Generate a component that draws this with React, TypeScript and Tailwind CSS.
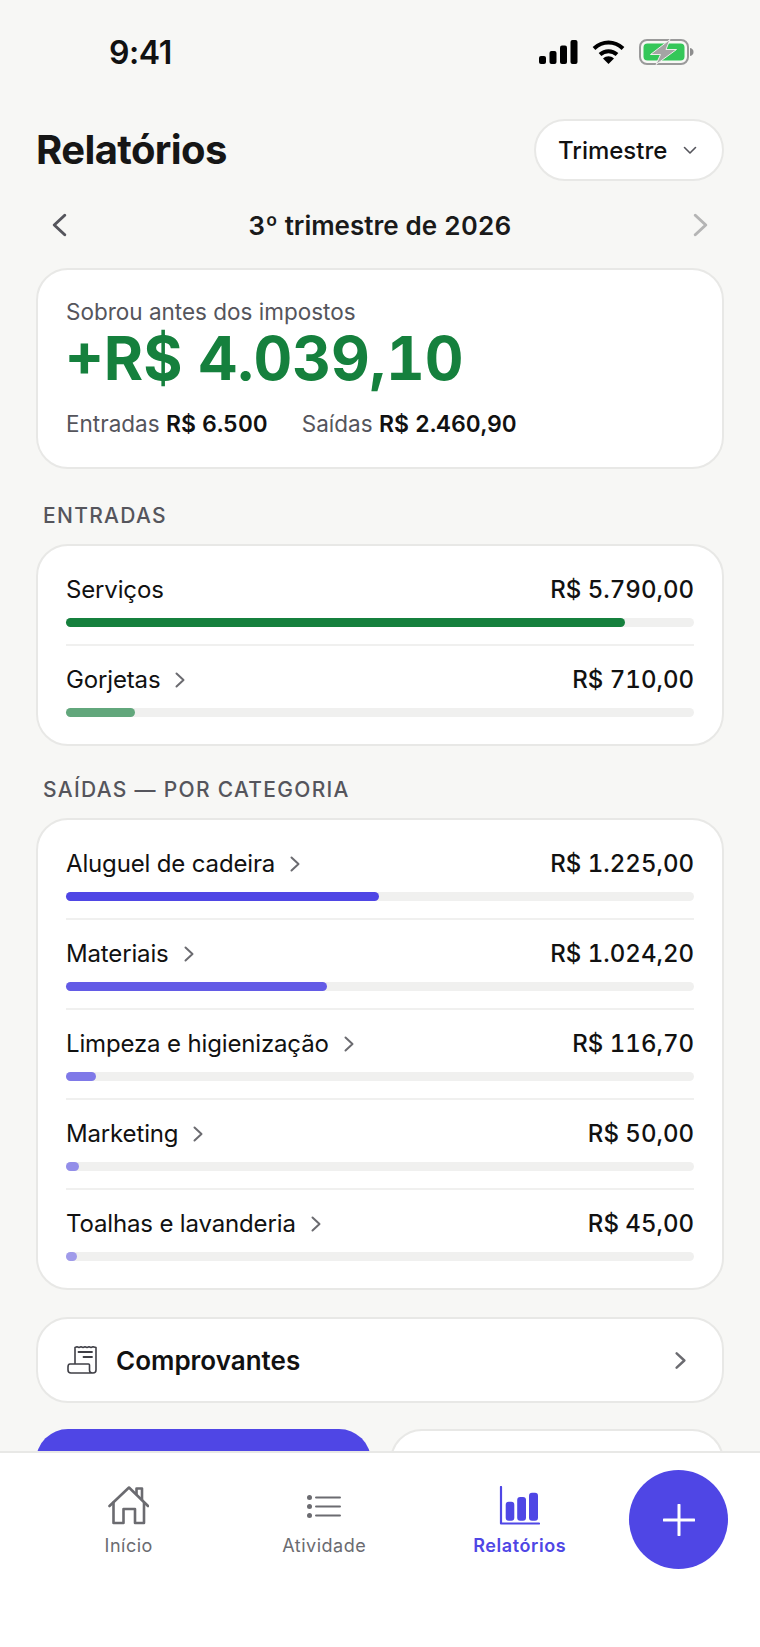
import React from 'react';

const Chevron = ({ className, width = 2 }: { className?: string; width?: number }) => (
  <svg viewBox="0 0 10 16" className={className} fill="none" stroke="currentColor" strokeWidth={width} strokeLinecap="round" strokeLinejoin="round">
    <polyline points="1.5,1.5 8.5,8 1.5,14.5" />
  </svg>
);

const StatusBar = () => (
  <div className="flex h-[104px] items-center justify-between pl-[109px] pr-[66px]">
    <span className="pt-[2px] text-[32px] font-semibold tracking-[-0.4px] text-[#111]">9:41</span>
    <div className="flex items-center gap-[14px]">
      <svg width="39" height="24" viewBox="0 0 39 24" fill="#000">
        <rect x="0" y="16" width="7" height="8" rx="2" />
        <rect x="10.5" y="11" width="7" height="13" rx="2" />
        <rect x="21" y="5.5" width="7" height="18.5" rx="2" />
        <rect x="31.5" y="0" width="7" height="24" rx="2" />
      </svg>
      <svg width="33" height="24" viewBox="0 0 33 24" fill="none" stroke="#000" strokeWidth="4">
        <path d="M2 8.5C10.5 0.5 22.5 0.5 31 8.5" />
        <path d="M8 14.5C13 10 20 10 25 14.5" />
        <path d="M16.5 24L11 18.5C14.5 15.5 18.5 15.5 22 18.5Z" fill="#000" stroke="none" />
      </svg>
      <svg width="55" height="26" viewBox="0 0 55 26">
        <rect x="1" y="1" width="48" height="24" rx="7" fill="none" stroke="#9a9a9a" strokeWidth="2" />
        <rect x="4.5" y="4.5" width="41" height="17" rx="4" fill="#34c759" />
        <path d="M51 9C53.5 9.5 54.5 11 54.5 13C54.5 15 53.5 16.5 51 17Z" fill="#8e8e8e" />
        <path d="M31 0.5L11.5 15.5H21.5L17 25.5L37.5 10.5H27Z" fill="#a4a4a4" stroke="#eeeeec" strokeWidth="1" />
      </svg>
    </div>
  </div>
);

const Bar = ({ pct, color, opacity }: { pct: number; color: string; opacity: number }) => (
  <div className="h-[9px] rounded-full bg-[#f0f0ef]">
    <div className={`h-full rounded-full ${color}`} style={{ width: `${pct}%`, opacity }} />
  </div>
);

type RowData = { label: string; value: string; pct: number; opacity: number; chevron?: boolean };

const Row = ({ row, color, first }: { row: RowData; color: string; first: boolean }) => (
  <div className={first ? 'pt-[26px] pb-[17px]' : 'border-t-2 border-[#f0f0ef] pt-[16px] pb-[17px]'}>
    <div className="flex h-[35px] items-center justify-between pt-[1px] text-[24px] text-[#111]">
      <div className="flex items-center gap-[15px]">
        <span className="tracking-[-0.15px]">{row.label}</span>
        {row.chevron && <Chevron className="h-[16px] w-[10px] text-[#6b6b70]" />}
      </div>
      <span className="font-medium tabular-nums">{row.value}</span>
    </div>
    <div className="mt-[11px]">
      <Bar pct={row.pct} color={color} opacity={row.opacity} />
    </div>
  </div>
);

const Card = ({ children, className = '' }: { children?: React.ReactNode; className?: string }) => (
  <div className={`rounded-[32px] border-2 border-[#e8e8e6] bg-white ${className}`}>{children}</div>
);

const SectionLabel = ({ children }: { children: React.ReactNode }) => (
  <div className="pl-[7px] text-[21px] leading-[28px] font-medium tracking-[1.3px] text-[#55555c]">{children}</div>
);

const entradas: RowData[] = [
  { label: 'Serviços', value: 'R$ 5.790,00', pct: 89.08, opacity: 1 },
  { label: 'Gorjetas', value: 'R$ 710,00', pct: 10.92, opacity: 0.65, chevron: true },
];

const saidas: RowData[] = [
  { label: 'Aluguel de cadeira', value: 'R$ 1.225,00', pct: 49.8, opacity: 1, chevron: true },
  { label: 'Materiais', value: 'R$ 1.024,20', pct: 41.6, opacity: 0.88, chevron: true },
  { label: 'Limpeza e higienização', value: 'R$ 116,70', pct: 4.74, opacity: 0.7, chevron: true },
  { label: 'Marketing', value: 'R$ 50,00', pct: 2.03, opacity: 0.58, chevron: true },
  { label: 'Toalhas e lavanderia', value: 'R$ 45,00', pct: 1.83, opacity: 0.5, chevron: true },
];

const HomeIcon = () => (
  <svg width="41" height="39" viewBox="0 0 41 39" fill="none" stroke="#6b6b70" strokeWidth="2.6" strokeLinejoin="round" strokeLinecap="round">
    <path d="M1.5 20L21 1.5L40 20" />
    <path d="M5.5 16.5V37H15.5V23H27V37H36V16.5" />
    <path d="M28.5 8V2.5H34V14" />
  </svg>
);

const ListIcon = () => (
  <svg width="34" height="23" viewBox="0 0 34 23" fill="#6b6b70">
    <circle cx="2.5" cy="2.5" r="2.5" />
    <circle cx="2.5" cy="11.5" r="2.5" />
    <circle cx="2.5" cy="20.5" r="2.5" />
    <rect x="8" y="1.4" width="26" height="2.2" rx="1.1" />
    <rect x="8" y="10.4" width="26" height="2.2" rx="1.1" />
    <rect x="8" y="19.4" width="26" height="2.2" rx="1.1" />
  </svg>
);

const ChartIcon = () => (
  <svg width="41" height="39" viewBox="0 0 41 39" fill="#4f46e5">
    <path d="M2 1V37.5H40" fill="none" stroke="#4f46e5" strokeWidth="2.2" strokeLinecap="round" strokeLinejoin="round" />
    <rect x="6.7" y="15.7" width="8.6" height="19" rx="3" />
    <rect x="18.2" y="11" width="8.8" height="23.7" rx="3" />
    <rect x="30" y="6.7" width="9" height="28" rx="3" />
  </svg>
);

const ReceiptIcon = () => (
  <svg width="30" height="28" viewBox="0 0 30 28" fill="none" stroke="#3f3f46" strokeWidth="1.6" strokeLinejoin="round" strokeLinecap="round">
    <path d="M8 18V1.5L10 0.8L12 1.5L14 0.8L16 1.5L18 0.8L20 1.5L22 0.8L24 1.5L26 0.8L29 1.5V24C29 26 27.5 27 26 27C24 27 22.5 26 22.5 24V19C22.5 18.3 22 18 21.5 18H3C1.5 18 1 19 1 21V24C1 26 2 27 4 27H26" />
    <path d="M11.5 6H25M16.5 11H25" strokeWidth="1.8" />
  </svg>
);

const navTab = 'flex w-[195.5px] flex-col items-center pt-[33px] text-[18px]';

export default function App() {
  return (
    <div className="flex h-[1647px] w-[760px] flex-col overflow-hidden bg-[#f7f7f5] font-['Inter',sans-serif] text-[#111]">
      <StatusBar />
      <div className="min-h-0 flex-1 overflow-hidden px-[36px]">
        <div className="mt-[15px] flex h-[62px] items-center justify-between">
          <h1 className="text-[40px] font-bold tracking-[-0.6px] text-[#161616]">Relatórios</h1>
          <div className="flex h-[62px] w-[190px] items-center gap-[16px] rounded-full border-2 border-[#e8e8e6] bg-white pl-[22px] pt-[1px]">
            <span className="text-[24px] font-medium">Trimestre</span>
            <svg width="14" height="9" viewBox="0 0 14 9" fill="none" stroke="#55555c" strokeWidth="1.6" strokeLinecap="round" strokeLinejoin="round">
              <polyline points="1.5,1.5 7,7 12.5,1.5" />
            </svg>
          </div>
        </div>

        <div className="mt-[26px] flex h-[36px] items-center justify-between px-[16px]">
          <Chevron className="h-[24px] w-[15px] rotate-180 text-[#55555c]" />
          <span className="text-[26px] font-semibold text-[#1a1a1a] tabular-nums">3º trimestre de 2026</span>
          <Chevron className="h-[24px] w-[15px] text-[#b5b5b5]" />
        </div>

        <Card className="mt-[25px] h-[201px] px-[28px] pt-[27px]">
          <div className="text-[22.5px] leading-[30px] text-[#55555c]">Sobrou antes dos impostos</div>
          <div className="mt-[1px] -ml-[1px] text-[60px] leading-[60px] font-bold text-[#15803d] tabular-nums">+R$ 4.039,10</div>
          <div className="mt-[21px] flex gap-[34px] text-[22.5px] leading-[30px] text-[#55555c]">
            <span>Entradas <b className="text-[23px] font-semibold text-[#111] tabular-nums">R$ 6.500</b></span>
            <span>Saídas <b className="text-[23px] font-semibold text-[#111] tabular-nums">R$ 2.460,90</b></span>
          </div>
        </Card>

        <div className="mt-[33px]"><SectionLabel>ENTRADAS</SectionLabel></div>
        <Card className="mt-[14px] px-[28px] pb-[10px]">
          {entradas.map((r, i) => <Row key={r.label} row={r} color="bg-[#15803d]" first={i === 0} />)}
        </Card>

        <div className="mt-[30px]"><SectionLabel>SAÍDAS — POR CATEGORIA</SectionLabel></div>
        <Card className="mt-[14px] px-[28px] pb-[10px]">
          {saidas.map((r, i) => <Row key={r.label} row={r} color="bg-[#4f46e5]" first={i === 0} />)}
        </Card>

        <Card className="mt-[27px] flex h-[86px] items-center pr-[36px] pl-[29px]">
          <ReceiptIcon />
          <span className="ml-[19px] flex-1 text-[26px] font-semibold">Comprovantes</span>
          <Chevron className="h-[19px] w-[11px] text-[#6b6b70]" width={2.2} />
        </Card>

        <div className="mt-[26px] grid grid-cols-2 gap-[19px]">
          <div className="h-[86px] rounded-[32px] bg-[#4f46e5]" />
          <Card className="h-[86px]" />
        </div>
      </div>

      <div className="flex h-[196px] shrink-0 items-start border-t-2 border-[#e8e8e6] bg-white pl-[31px]">
        <div className={`${navTab} font-normal text-[#6b6b70]`}>
          <div className="flex h-[40px] items-start"><HomeIcon /></div>
          <span className="mt-[6px] tracking-[0.5px]">Início</span>
        </div>
        <div className={`${navTab} font-normal text-[#6b6b70]`}>
          <div className="flex h-[40px] items-center"><ListIcon /></div>
          <span className="mt-[6px] tracking-[0.5px]">Atividade</span>
        </div>
        <div className={`${navTab} font-semibold text-[#4f46e5]`}>
          <div className="flex h-[40px] items-start"><ChartIcon /></div>
          <span className="mt-[6px] tracking-[0.6px]">Relatórios</span>
        </div>
        <div className="mt-[17px] ml-[11.5px] flex h-[99px] w-[99px] shrink-0 items-center justify-center rounded-full bg-[#4f46e5]">
          <svg width="32" height="32" viewBox="0 0 32 32" stroke="#fff" strokeWidth="3" strokeLinecap="round">
            <path d="M16 1V31M1 16H31" />
          </svg>
        </div>
      </div>
    </div>
  );
}
